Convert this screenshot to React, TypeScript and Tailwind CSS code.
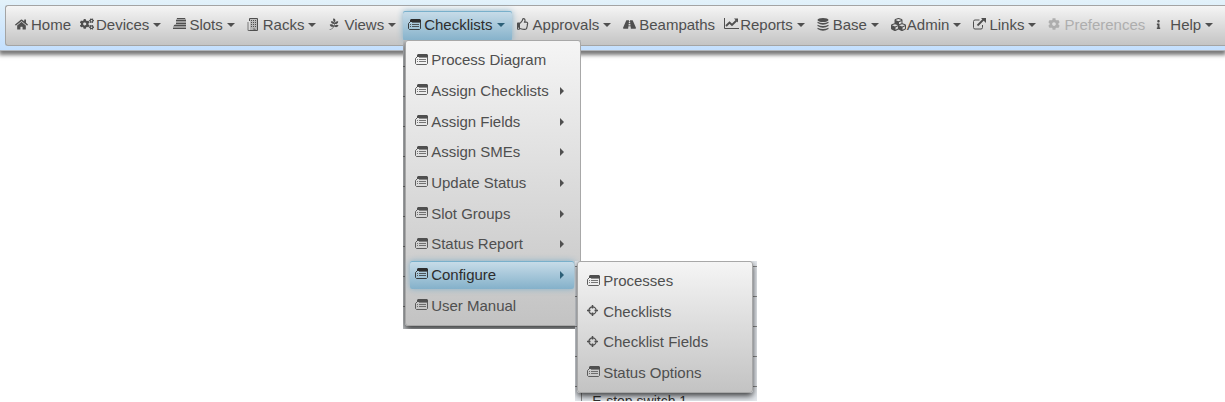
import React from "react";
import { FaHome, FaCogs, FaPagelines, FaRegThumbsUp, FaCubes, FaCog, FaInfo, FaRoad } from "react-icons/fa";

type IconName = "list" | "server" | "cross" | "home" | "cogs" | "building" | "leaf" | "thumb" | "road" | "chart" | "db" | "cubes" | "link" | "cog" | "info";

function ListIcon() {
  return (
    <svg width="13" height="11" viewBox="0 0 13 11" fill="none" aria-hidden="true">
      <path d="M3 0h9l1 1v2H2V1z" fill="currentColor" />
      <path d="M2.500 2.500 .5 4.500v5l1 1h10l1-1v-7" stroke="currentColor" strokeWidth=".9" />
      <path d="M4 3h8v1H4z" fill="currentColor" opacity=".6" />
      <path d="M2 5.500h1M4 5.500h7M2 7.500h1M4 7.500h7" stroke="currentColor" opacity=".75" />
    </svg>
  );
}
function ServerIcon() {
  return (
    <svg width="14" height="12" viewBox="0 0 14 12" aria-hidden="true" fill="currentColor">
      <path d="M4 0h8l1 1v10H0V9l1-2 2-1V2z" opacity=".45" />
      <path d="M4 0h8v1H4zM3 2h10v1H3zM3 5h10v1H3zM1 7h12v1H1zM0 10h13v1H0z" />
    </svg>
  );
}
function BuildingIcon() {
  return (
    <svg width="11" height="13" viewBox="0 0 11 13" aria-hidden="true" fill="none" stroke="currentColor">
      <path d="M2.500 3V.5h8v12h-8" />
      <path d="M4.500 2v8M6.500 2v8M8.500 2v8" strokeDasharray="1 1" />
      <path d="M1 4v8.500h4M6 11h2v1.500" opacity=".7" />
      <path d="M3 1h7v11H3z" fill="currentColor" stroke="none" opacity=".25" />
    </svg>
  );
}
function CrossIcon() {
  return (
    <svg width="11" height="11" viewBox="0 0 11 11" aria-hidden="true" fill="none" stroke="currentColor">
      <circle cx="5.500" cy="5.500" r="3.600" strokeWidth="1.200" />
      <path d="M5.500 0v3.500M5.500 7.500V11M0 5.500h3.500M7.500 5.500H11" strokeWidth="1.500" />
    </svg>
  );
}
function ChartIcon() {
  return (
    <svg width="15" height="12" viewBox="0 0 15 12" aria-hidden="true" fill="none" stroke="currentColor">
      <path d="M.5 0v10.500H15" />
      <path d="m2 8 3.500-3.500L8 7l4.500-4.500" strokeWidth="1.900" />
      <path d="M10 .5h4v4z" fill="currentColor" stroke="none" />
    </svg>
  );
}
function DatabaseIcon() {
  return (
    <svg width="12" height="13" viewBox="0 0 12 13" aria-hidden="true" fill="currentColor">
      <ellipse cx="6" cy="2" rx="5.500" ry="2" />
      <path d="M.5 3.700q5.500 2.600 11 0v1.400q-5.500 3.400-11 0zM.5 6.700q5.500 2.600 11 0v1.400q-5.500 3.400-11 0zM.5 9.700q5.500 2.600 11 0v1.400q-5.500 3.400-11 0z" />
    </svg>
  );
}
function LinkIcon() {
  return (
    <svg width="13" height="12" viewBox="0 0 13 12" aria-hidden="true" fill="none" stroke="currentColor">
      <path d="M6.500 2H2Q.5 2 .5 3.500v6Q.5 11 2 11h6q1.500 0 1.500-1.500V7" />
      <path d="M4.500 7.500 10.500 1.500" strokeWidth="1.800" />
      <path d="M8 0h5v5z" fill="currentColor" stroke="none" />
    </svg>
  );
}

function Icon({ name }: { name: IconName }) {
  const map: Record<IconName, React.ReactNode> = {
    list: <ListIcon />,
    server: <ServerIcon />,
    cross: <CrossIcon />,
    home: <FaHome size={13} />,
    cogs: <FaCogs size={14} />,
    building: <BuildingIcon />,
    leaf: <FaPagelines size={12} />,
    thumb: <FaRegThumbsUp size={12} />,
    road: <FaRoad size={13} />,
    chart: <ChartIcon />,
    db: <DatabaseIcon />,
    cubes: <FaCubes size={15} />,
    link: <LinkIcon />,
    cog: <FaCog size={12} />,
    info: <FaInfo size={9} />,
  };
  return <span className="flex h-5 w-4 shrink-0 items-center justify-start pb-0.5">{map[name]}</span>;
}

interface Item { label: string; icon: IconName; arrow?: boolean; active?: boolean; disabled?: boolean }

const bar: Item[] = [
  { label: "Home", icon: "home" },
  { label: "Devices", icon: "cogs", arrow: true },
  { label: "Slots", icon: "server", arrow: true },
  { label: "Racks", icon: "building", arrow: true },
  { label: "Views", icon: "leaf", arrow: true },
  { label: "Checklists", icon: "list", arrow: true, active: true },
  { label: "Approvals", icon: "thumb", arrow: true },
  { label: "Beampaths", icon: "road" },
  { label: "Reports", icon: "chart", arrow: true },
  { label: "Base", icon: "db", arrow: true },
  { label: "Admin", icon: "cubes", arrow: true },
  { label: "Links", icon: "link", arrow: true },
  { label: "Preferences", icon: "cog", disabled: true },
  { label: "Help", icon: "info", arrow: true },
];
const menu: Item[] = [
  { label: "Process Diagram", icon: "list" },
  { label: "Assign Checklists", icon: "list", arrow: true },
  { label: "Assign Fields", icon: "list", arrow: true },
  { label: "Assign SMEs", icon: "list", arrow: true },
  { label: "Update Status", icon: "list", arrow: true },
  { label: "Slot Groups", icon: "list", arrow: true },
  { label: "Status Report", icon: "list", arrow: true },
  { label: "Configure", icon: "list", arrow: true, active: true },
  { label: "User Manual", icon: "list" },
];
const submenu: Item[] = [
  { label: "Processes", icon: "list" },
  { label: "Checklists", icon: "cross" },
  { label: "Checklist Fields", icon: "cross" },
  { label: "Status Options", icon: "list" },
];

const activeLook = "rounded-xs bg-linear-to-b from-[#c9dde9] to-[#84b1ca] text-[#2d2d2d] shadow-[inset_0_1px_0_#79b0cb,0_0_6px_#85b2cb]";
const panel = "w-44 rounded-[3px] border border-[#a8a8a8] bg-linear-to-b from-[#f5f5f5] to-[#c3c3c3] py-1 pl-1 pr-1.5 shadow-[0_3px_6px_#000b]";

function MenuRow({ item }: { item: Item }) {
  return (
    <li className="flex items-center">
      <button className={`flex h-7 w-full items-center pl-[5px] pr-2.5 text-left ${item.active ? activeLook : ""}`}>
        <Icon name={item.icon} />
        <span className="flex-1">{item.label}</span>
        {item.arrow && (
          <svg width="4" height="8" viewBox="0 0 4 8" aria-hidden="true" className={item.active ? "text-[#2d6078]" : ""}>
            <path d="M0 0 4 4 0 8z" fill="currentColor" />
          </svg>
        )}
      </button>
    </li>
  );
}

export default function App() {
  return (
    <div className="min-h-screen overflow-hidden bg-white font-['Liberation_Sans',Arial,sans-serif] text-[15px] leading-5 text-[#4f4f4f]">
      <header className="relative z-10 border-b border-[#b0b5bb] bg-linear-to-b from-[#e3f2fa] to-[#c3dffe] pb-1 pl-[5px] pt-[5px] shadow-[0_3px_4px_1px_#0008]">
        <nav className="rounded-l-[3px] border border-r-0 border-[#a4a4a4] bg-linear-to-b from-[#f5f5f5] to-[#c4c4c4] pb-1 pl-1 pt-[5px]">
          <ul className="flex whitespace-nowrap">
            {bar.map((it) => (
              <li key={it.label} className="relative">
                <button
                  disabled={it.disabled}
                  className={`flex h-[30px] items-center pb-0.5 pl-[5px] ${it.arrow ? "pr-[7px]" : "pr-1"} ${it.active ? activeLook : ""} ${it.disabled ? "text-[#aeaeae]" : ""}`}
                >
                  <Icon name={it.icon} />
                  <span>{it.label}</span>
                  {it.arrow && (
                    <svg width="8" height="4" viewBox="0 0 8 4" aria-hidden="true" className={`ml-1 ${it.active ? "text-[#2d6078]" : ""}`}>
                      <path d="M0 0h8L4 4z" fill="currentColor" />
                    </svg>
                  )}
                </button>
                {it.active && (
                  <div className="absolute left-0 top-[29px]">
                    <div className="overflow-hidden bg-[linear-gradient(#777_1px,#c4c7ca_1px)] bg-[size:100%_30px] bg-[position:0_26px] pb-[3px] pl-0.5">
                      <ul className={`grid h-[286px] grid-rows-9 ${panel}`}>
                        {menu.map((m) => <MenuRow key={m.label} item={m} />)}
                      </ul>
                    </div>
                    <div className="absolute left-[172px] top-[221px] overflow-hidden bg-[linear-gradient(#888_1px,#e4e8ed_1px)] bg-[size:100%_30px] bg-[position:0_5px] pl-0.5 pr-1">
                      <ul className={`relative grid h-[132px] grid-rows-4 ${panel}`}>
                        {submenu.map((m) => <MenuRow key={m.label} item={m} />)}
                      </ul>
                      <p className="ml-1 h-2 border-l border-[#888] pl-2.5 text-sm leading-4 text-[#333]">E-stop switch 1</p>
                    </div>
                  </div>
                )}
              </li>
            ))}
          </ul>
        </nav>
      </header>
    </div>
  );
}
